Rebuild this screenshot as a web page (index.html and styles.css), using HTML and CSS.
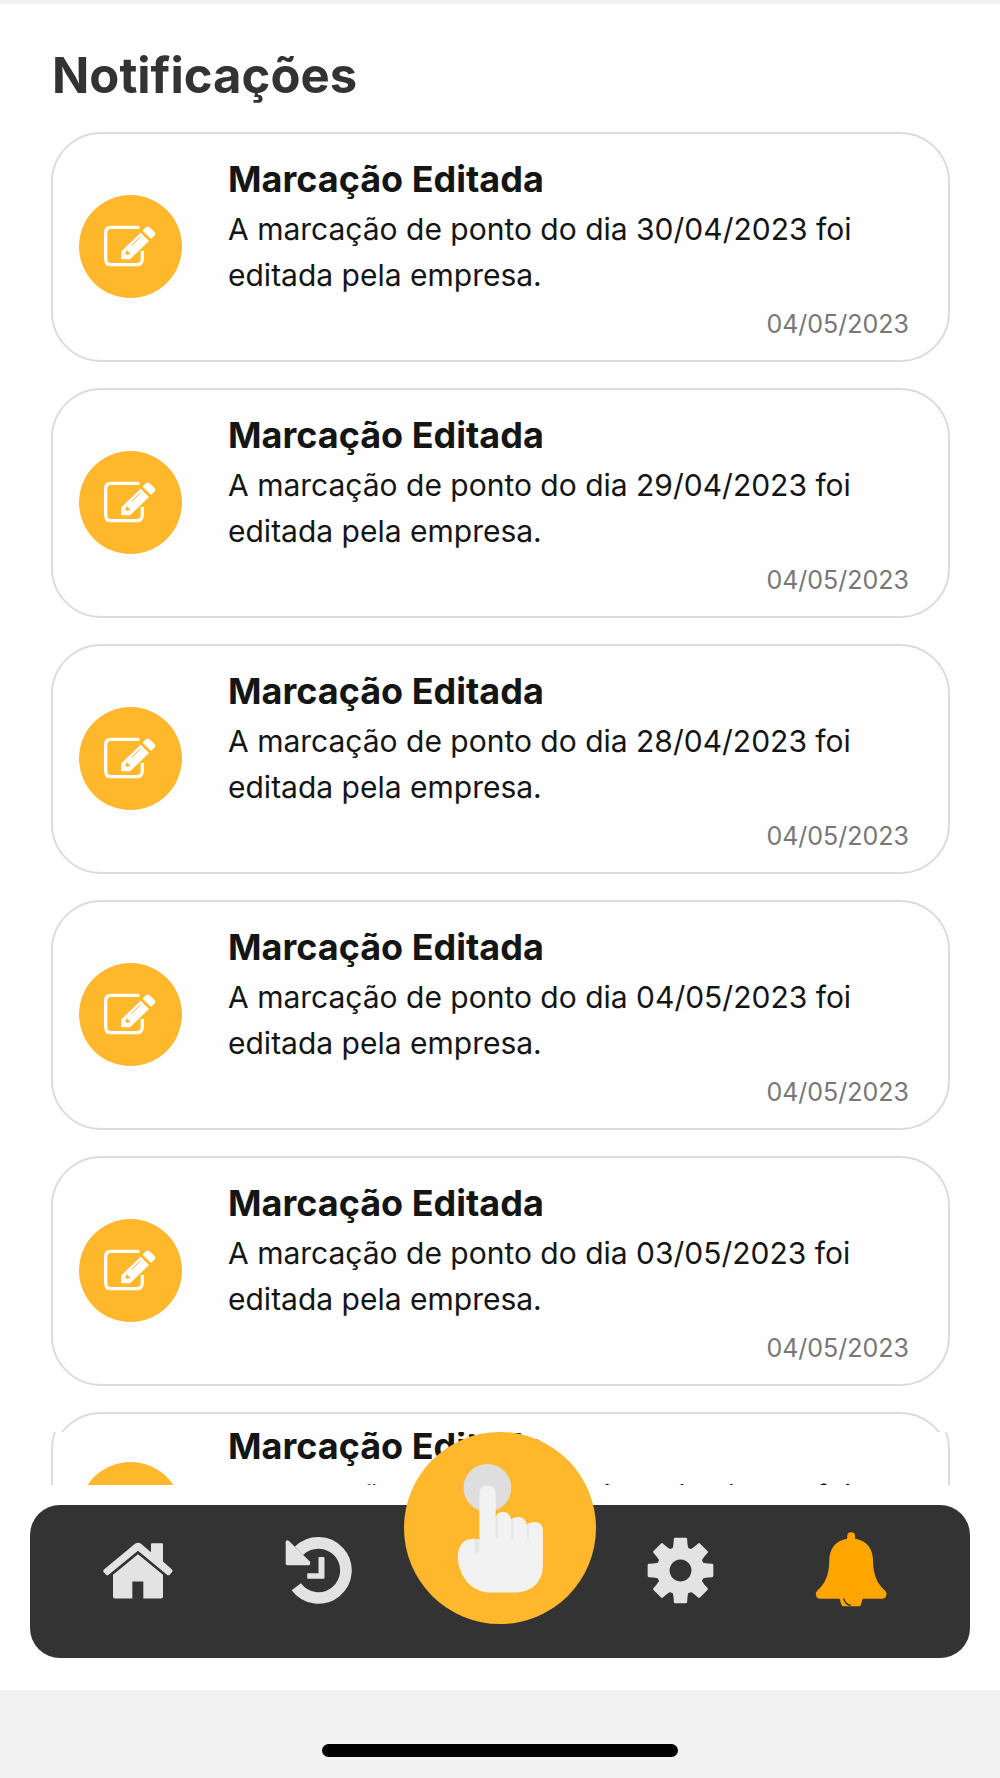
FILE: index.html
```html
<!DOCTYPE html>
<html lang="pt-BR">
<head>
<meta charset="utf-8">
<meta name="viewport" content="width=device-width, initial-scale=1">
<title>Notificações</title>
<link rel="stylesheet" href="styles.css">
</head>
<body>
<svg class="sprite" aria-hidden="true">
  <symbol id="edit" viewBox="102 128 162 126">
    <path d="M208 135H123Q107 135 107 152V229Q107 247 123 247H199Q217 247 217 229V206" fill="none" stroke="#fff" stroke-width="10"/>
    <path d="M212 151L237 176L180 231H154V207Z" fill="#fff"/>
    <path d="M218 145L226 136Q232 130 239 135L253 149Q259 155 253 160L243 170Z" fill="#fff"/>
    <path d="M184 189L212 163" stroke="#ffb82b" stroke-width="3" fill="none"/>
    <path d="M166 210L173 203L175 209L182 211L174 218L166 215Z" fill="#ffb82b"/>
  </symbol>
</svg>
<main class="screen">
  <h1 class="heading">Notificações</h1>
  <section class="list">
    <article class="card">
      <span class="badge"><svg class="badge-icon"><use href="#edit"/></svg></span>
      <div class="card-body">
        <h2 class="title">Marcação Editada</h2>
        <p class="text">A marcação de ponto do dia 30/04/2023 foi editada pela empresa.</p>
        <time class="date">04/05/2023</time>
      </div>
    </article>
    <article class="card">
      <span class="badge"><svg class="badge-icon"><use href="#edit"/></svg></span>
      <div class="card-body">
        <h2 class="title">Marcação Editada</h2>
        <p class="text">A marcação de ponto do dia 29/04/2023 foi editada pela empresa.</p>
        <time class="date">04/05/2023</time>
      </div>
    </article>
    <article class="card">
      <span class="badge"><svg class="badge-icon"><use href="#edit"/></svg></span>
      <div class="card-body">
        <h2 class="title">Marcação Editada</h2>
        <p class="text">A marcação de ponto do dia 28/04/2023 foi editada pela empresa.</p>
        <time class="date">04/05/2023</time>
      </div>
    </article>
    <article class="card">
      <span class="badge"><svg class="badge-icon"><use href="#edit"/></svg></span>
      <div class="card-body">
        <h2 class="title">Marcação Editada</h2>
        <p class="text">A marcação de ponto do dia 04/05/2023 foi editada pela empresa.</p>
        <time class="date">04/05/2023</time>
      </div>
    </article>
    <article class="card">
      <span class="badge"><svg class="badge-icon"><use href="#edit"/></svg></span>
      <div class="card-body">
        <h2 class="title">Marcação Editada</h2>
        <p class="text">A marcação de ponto do dia 03/05/2023 foi editada pela empresa.</p>
        <time class="date">04/05/2023</time>
      </div>
    </article>
    <div class="card-edge"></div>
  </section>
  <section class="peek">
    <article class="card">
      <span class="badge"><svg class="badge-icon"><use href="#edit"/></svg></span>
      <div class="card-body">
        <h2 class="title">Marcação Editada</h2>
        <p class="text">A marcação de ponto do dia 02/04/2023 foi editada pela empresa.</p>
      </div>
    </article>
  </section>
  <nav class="tabs" aria-label="Principal">
    <a class="tab" href="#inicio" aria-label="Início">
      <svg class="home-icon" viewBox="66 94 210 170">
        <path d="M213 97H243Q246 97 246 100V152L273 176Q276 180 273 184L266 192Q262 195 258 192L171 120L83 192Q79 195 75 192L68 184Q65 180 69 176L162 99Q171 92 180 99L210 124V100Q210 97 213 97Z"/>
        <path d="M171 130L246 192V257Q246 263 240 263H187V212H154V263H102Q96 263 96 257V192Z"/>
      </svg>
    </a>
    <a class="tab" href="#historico" aria-label="Histórico">
      <svg class="round-icon" viewBox="615 78 202 202">
        <path d="M657 120A83 83 0 1 1 649 228" fill="none" stroke="#e3e3e3" stroke-width="35"/>
        <path d="M617 94Q617 88 622 88L627 90L690 152Q693 162 687 163H622Q617 163 617 158Z"/>
        <path d="M719 138H731Q734 138 734 141V201Q734 204 731 204H684Q682 204 682 201V190Q682 187 684 187H716V141Q716 138 719 138Z"/>
      </svg>
    </a>
    <button class="fab" type="button" aria-label="Registrar ponto">
      <svg class="fab-icon" viewBox="42 35 578 578">
        <circle cx="293" cy="203" r="72" fill="#dedede"/>
        <path d="M269 220Q269 196 293 196T318 220V296Q320 275 341 275Q360 277 365 299Q370 291 389 291Q407 293 412 315Q420 306 437 306Q460 308 460 331V440Q456 510 384 518H300C240 518 204 460 204 410Q206 358 250 356Q262 356 269 360Z" fill="#f2f2f2"/>
        <path d="M254 357Q263 356 269 360V388Q269 398 254 404ZM318 296L325 286V357H318ZM365 299L371 293V357H365ZM412 315L418 309V357H412Z" fill="#e6e6e6"/>
      </svg>
    </button>
    <a class="tab" href="#ajustes" aria-label="Ajustes">
      <svg class="round-icon" viewBox="81 78 202 202">
        <path fill-rule="evenodd" d="M182 107A72 72 0 1 1 181.900 107ZM182 146A33 33 0 1 0 182.100 146Z"/>
        <g id="teeth">
          <path id="tooth" d="M155 118Q161 112 162 84Q162 80 166 80H198Q202 80 202 84Q203 112 209 118Z"/>
          <use href="#tooth" transform="rotate(45 182 179)"/>
          <use href="#tooth" transform="rotate(90 182 179)"/>
          <use href="#tooth" transform="rotate(135 182 179)"/>
        </g>
        <use href="#teeth" transform="rotate(180 182 179)"/>
      </svg>
    </a>
    <a class="tab tab-active" href="#notificacoes" aria-label="Notificações" aria-current="page">
      <svg class="bell-icon" viewBox="582 62 217 235">
        <path d="M679 82V75Q679 63 691 63T703 75V82C738 87 756 112 757 146C757 192 770 218 793 238Q799 244 797 253Q794 263 784 263H726Q723 270 720 282Q719 286 715 286H668C662 286 660 276 656 263H598Q588 263 585 253Q583 244 589 238C612 218 625 192 625 146C626 112 644 87 679 82Z"/>
        <path d="M669 262Q672 280 690 283" fill="none" stroke="#333" stroke-width="4"/>
      </svg>
    </a>
  </nav>
</main>
<footer class="system-bar"><span class="home-indicator"></span></footer>
</body>
</html>
```

FILE: styles.css
```css
* {
  box-sizing: border-box;
}

body {
  margin: 0;
  min-height: 100vh;
  display: flex;
  flex-direction: column;
  background: #f1f1f1;
  color: #151515;
  font-family: Inter, "Liberation Sans", sans-serif;
}

.sprite {
  display: none;
}

.screen {
  margin-top: 4px;
  padding-bottom: 32px;
  background: #fefefe;
}

.heading {
  margin: 0;
  padding: 42px 52px 26px;
  font-size: 49px;
  line-height: 60px;
  font-weight: 700;
  color: #333;
}

.list {
  display: flex;
  flex-direction: column;
  gap: 26px;
  padding: 0 50px 0 51px;
}

.card {
  display: flex;
  align-items: center;
  gap: 46px;
  padding: 18px 39px 20px 26px;
  border: 2px solid #dcdcdc;
  border-radius: 50px;
}

.card-edge {
  height: 20px;
  overflow: hidden;
}

.card-edge::before {
  content: "";
  display: block;
  height: 120px;
  border: 2px solid #dcdcdc;
  border-radius: 50px;
}

.badge {
  flex: none;
  display: flex;
  align-items: center;
  justify-content: center;
  width: 103px;
  height: 103px;
  border-radius: 50%;
  background: #ffb82b;
}

.badge-icon {
  width: 54px;
  height: 42px;
}

.card-body {
  flex: 1;
  display: flex;
  flex-direction: column;
}

.title {
  margin: 0;
  font-size: 36px;
  line-height: 54px;
  font-weight: 700;
}

.text {
  margin: 0 0 10px;
  font-size: 30px;
  line-height: 46px;
}

.date {
  align-self: flex-end;
  font-size: 25px;
  line-height: 32px;
  color: #777;
}

/* The part of the next notification still visible above the tab bar */
.peek {
  height: 53px;
  padding: 0 50px 0 51px;
  overflow: hidden;
}

.peek .card {
  height: 230px;
  margin-top: -33px;
}

.peek .card-body {
  align-self: flex-start;
}

.tabs {
  display: grid;
  grid-template-columns: repeat(4, minmax(0, 8fr)) minmax(0, 7fr);
  align-items: center;
  justify-items: center;
  height: 153px;
  margin: 20px 30px 0;
  padding: 0 40px 22px 17px;
  border-radius: 30px;
  background: #333;
}

.tab {
  display: flex;
  fill: #e3e3e3;
}

.tab-active {
  fill: #ffa500;
}

.home-icon {
  width: 70px;
  height: 57px;
}

.round-icon {
  width: 67px;
  height: 67px;
}

.bell-icon {
  width: 72px;
  height: 78px;
}

.fab {
  align-self: start;
  justify-self: center;
  width: 192px;
  height: 192px;
  margin: -73px -6px 0;
  padding: 0;
  border: 0;
  border-radius: 50%;
  background: #ffb82b;
}

.fab-icon {
  display: block;
  width: 192px;
  height: 192px;
}

.system-bar {
  flex: 1;
  display: flex;
  justify-content: center;
  align-items: flex-end;
  padding: 54px 0 21px;
}

.home-indicator {
  width: 356px;
  height: 13px;
  border-radius: 7px;
  background: #000;
}
```
